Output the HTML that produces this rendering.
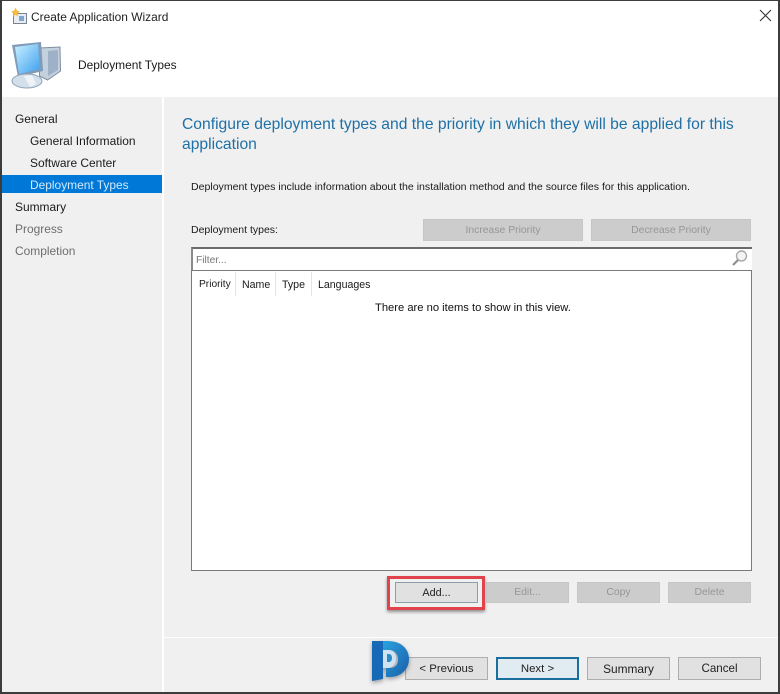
<!DOCTYPE html>
<html><head><meta charset="utf-8"><style>
html,body{margin:0;padding:0;width:780px;height:694px;overflow:hidden;background:#fff}
body{position:relative;font-family:"Liberation Sans",sans-serif;font-size:10.6px;color:#1a1a1a}
.a{position:absolute}
.t{position:absolute;white-space:nowrap;line-height:14px}
.b{position:absolute;box-sizing:border-box;text-align:center;white-space:nowrap;font-size:12px;line-height:22px;height:23px;background:#e1e1e1;border:1px solid #adadad;color:#222}
.d{background:#cccccc;border-color:#c6c6c6;color:#969696;height:22px;line-height:21px;font-size:10.4px}
.n{font-size:11.95px}
.g{color:#6d6d6d}
</style></head><body>
<div class="a" style="left:0;top:0;width:780px;height:694px;box-sizing:border-box;border:2px solid #3c3c3c;border-top-width:1px;z-index:9;pointer-events:none"></div>

<svg class="a" style="left:9px;top:7px" width="20" height="18" viewBox="0 0 20 18"><rect x="4.5" y="6.5" width="13" height="10" fill="#e9edf2" stroke="#77858f"/><rect x="10" y="9" width="5" height="5" fill="#7fa8cf"/><path d="M6.5 0.5l1.4 3L11 4.6 8.4 6.4l.7 3.2L6.5 7.8 3.9 9.6l.7-3.2L2 4.6l3.1-1.1z" fill="#f6bb3f"/></svg>
<div class="t n" style="left:31px;top:10px;color:#222">Create Application Wizard</div>
<svg class="a" style="left:759px;top:9px" width="13" height="13" viewBox="0 0 13 13"><path d="M1 1l11 11M12 1L1 12" stroke="#333" stroke-width="1.1" fill="none"/></svg>

<svg class="a" style="left:10px;top:40px" width="54" height="50" viewBox="0 0 54 50">
<defs><linearGradient id="s" x1="0" y1="0" x2="1" y2="1"><stop offset="0" stop-color="#c9f0ff"/><stop offset="1" stop-color="#3c9fee"/></linearGradient></defs>
<path d="M29 8l21-1 .5 24-13 9-8-4z" fill="#c3d0de" stroke="#7e8ea2"/>
<path d="M38 11l10-1v20l-10 6z" fill="#9fb1c6"/>
<path d="M2 5L31 2l2 29L8 37z" fill="#7f9bb8"/>
<path d="M5 7l23-3 2 25L9 34z" fill="url(#s)"/>
<ellipse cx="17" cy="41" rx="15" ry="7" fill="#d3dfeb" stroke="#8fa3b8"/>
<path d="M14 36l8-1 4 9-6 3z" fill="#eef3f8"/>
</svg>
<div class="t n" style="left:78px;top:58px">Deployment Types</div>

<!-- sidebar -->
<div class="a" style="left:2px;top:97px;width:160px;height:595px;background:#f0f0f0"></div>
<div class="a" style="left:2px;top:175px;width:160px;height:18px;background:#0078d7"></div>
<div class="t n" style="left:15px;top:112px">General</div>
<div class="t n" style="left:30px;top:134px">General Information</div>
<div class="t n" style="left:30px;top:156px">Software Center</div>
<div class="t n" style="left:30px;top:178px;color:#d4e9fb">Deployment Types</div>
<div class="t n" style="left:15px;top:200px">Summary</div>
<div class="t n g" style="left:15px;top:222px">Progress</div>
<div class="t n g" style="left:15px;top:244px">Completion</div>

<!-- main -->
<div class="a" style="left:164px;top:97px;width:614px;height:595px;background:#f0f0f0"></div>
<div class="a" style="left:164px;top:637px;width:614px;height:1px;background:#fdfdfd"></div>
<div class="t" style="left:182px;top:115px;font-size:15.66px;line-height:20px;color:#1f70a6;white-space:nowrap">Configure deployment types and the priority in which they will be applied for this<br>application</div>
<div class="t" style="left:191px;top:180px;font-size:10.56px">Deployment types include information about the installation method and the source files for this application.</div>
<div class="t" style="left:191px;top:223px;font-size:10.5px">Deployment types:</div>

<div class="b d" style="left:423px;top:219px;width:160px">Increase Priority</div>
<div class="b d" style="left:591px;top:219px;width:160px">Decrease Priority</div>

<!-- filter -->
<div class="a" style="left:191px;top:247px;width:561px;height:23px;box-sizing:border-box;background:#fff;border-top:2px solid #6a6a6a;border-left:2px solid #8a8a8a"></div>
<div class="t" style="left:196px;top:254px;font-size:10.2px;color:#777">Filter...</div>
<svg class="a" style="left:731px;top:249px" width="18" height="18" viewBox="0 0 18 18"><circle cx="10.5" cy="7" r="5" fill="#f4f4f4" stroke="#a8a8a8" stroke-width="1.4"/><path d="M7 11l-5 5" stroke="#8f8f8f" stroke-width="2.2"/></svg>

<!-- list -->
<div class="a" style="left:191px;top:270px;width:561px;height:301px;box-sizing:border-box;background:#fff;border:1px solid #7a7a7a"></div>
<div class="a" style="left:235px;top:272px;width:1px;height:24px;background:#e5e5e5"></div>
<div class="a" style="left:275px;top:272px;width:1px;height:24px;background:#e5e5e5"></div>
<div class="a" style="left:311px;top:272px;width:1px;height:24px;background:#e5e5e5"></div>
<div class="t" style="left:199px;top:278px;font-size:10.2px">Priority</div>
<div class="t" style="left:242px;top:278px;font-size:10.6px">Name</div>
<div class="t" style="left:282px;top:278px;font-size:10.6px">Type</div>
<div class="t" style="left:318px;top:278px;font-size:10.6px">Languages</div>
<div class="t" style="left:375px;top:301px;color:#111;font-size:11.2px">There are no items to show in this view.</div>

<!-- buttons -->
<div class="a" style="left:387px;top:576px;width:98px;height:34px;box-sizing:border-box;border:3px solid #e0434c;box-shadow:0 2px 3px rgba(0,0,0,.4)"></div>
<div class="b" style="left:395px;top:582px;width:83px;height:21px;line-height:20px;border-color:#8aa0a8;font-size:10.8px">Add...</div>
<div class="b d" style="left:486px;top:582px;width:83px;height:21px;line-height:20px">Edit...</div>
<div class="b d" style="left:577px;top:582px;width:83px;height:21px;line-height:20px">Copy</div>
<div class="b d" style="left:668px;top:582px;width:83px;height:21px;line-height:20px">Delete</div>

<div class="b" style="left:405px;top:657px;width:83px;font-size:11.4px">&lt; Previous</div>
<div class="b" style="left:496px;top:657px;width:83px;border:2px solid #1b6f9e;background:#e1ebf2;line-height:20px;font-size:11.4px">Next &gt;</div>
<div class="b" style="left:587px;top:657px;width:83px;font-size:11.9px">Summary</div>
<div class="b" style="left:678px;top:657px;width:83px;font-size:11.6px">Cancel</div>

<!-- logo -->
<svg class="a" style="left:368px;top:638px;z-index:3;filter:drop-shadow(0 2px 2px rgba(0,0,0,.35))" width="44" height="46" viewBox="0 0 44 46">
<defs><linearGradient id="p" x1="0" y1="0" x2="1" y2="1"><stop offset="0" stop-color="#2aa3e0"/><stop offset="1" stop-color="#1a5ea8"/></linearGradient></defs>
<path d="M4 3h11v38l-11 2z" fill="#1769b5"/>
<path d="M15 3h5c12 0 21 7 21 18s-9 18-19 18h-4v-9h3c6 0 9-3 9-9s-4-9-10-9h-5z" fill="url(#p)"/>
<path d="M15 12h6c4 0 7 3 7 8s-3 10-8 10h-5z" fill="#cfe3f2"/>
<path d="M19 16h2c2 0 3 2 3 4s-1 4-3 4h-2z" fill="#2e8bca"/>
</svg>
</body></html>
